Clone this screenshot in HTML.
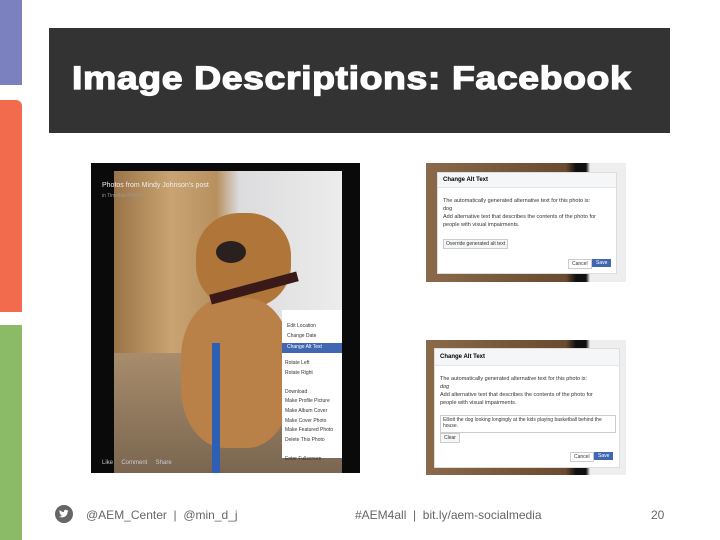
<!DOCTYPE html>
<html><head><style>
body{margin:0;width:720px;height:540px;background:#fff;position:relative;overflow:hidden;font-family:"Liberation Sans",sans-serif}
.a{position:absolute}
.t{font-size:6px;color:#333}
</style></head><body>
<div class="a" style="left:0;top:0;width:22px;height:85px;background:#7b80bf"></div>
<div class="a" style="left:0;top:100px;width:22px;height:212px;background:#f26b4c;border-radius:0 6px 0 0"></div>
<div class="a" style="left:0;top:325px;width:22px;height:215px;background:#8cbb68"></div>
<div class="a" style="left:49px;top:28px;width:621px;height:105px;background:#333"></div>
<div class="a" style="left:72px;top:60px;color:#fff;font-size:32px;font-weight:900;letter-spacing:0.5px;-webkit-text-stroke:1.2px #fff;transform:scaleX(1.17);transform-origin:0 0;white-space:nowrap">Image Descriptions: Facebook</div>

<!-- main photo -->
<div class="a" style="left:91px;top:163px;width:269px;height:310px;background:#0a0a0a;overflow:hidden">
 <div class="a" style="left:23px;top:8px;width:228px;height:302px;background:linear-gradient(90deg,#9a7448 0,#c9a472 25%,#b89060 45%,#dcdcde 55%,#ececec 100%)"></div>
 <div class="a" style="left:23px;top:190px;width:228px;height:120px;background:linear-gradient(180deg,#a88d6c,#7a6650)"></div>
 <div class="a" style="left:105px;top:50px;width:95px;height:95px;border-radius:45%;background:#b07538"></div>
 <div class="a" style="left:90px;top:135px;width:110px;height:150px;border-radius:40%;background:#b98048"></div>
 <div class="a" style="left:125px;top:78px;width:30px;height:22px;border-radius:50%;background:#2a2020"></div>
 <div class="a" style="left:118px;top:120px;width:90px;height:10px;background:#3a1a18;transform:rotate(-15deg)"></div>
 <div class="a" style="left:121px;top:180px;width:8px;height:130px;background:#2d5fb5"></div>
 <div class="a" style="left:11px;top:19px;color:#eee;font-size:7px">Photos from Mindy Johnson's post</div>
 <div class="a" style="left:11px;top:30px;color:#999;font-size:5px">in Timeline Photos</div>
 <div class="a" style="left:191px;top:147px;width:60px;height:148px;background:#fff"></div>
 <div class="a" style="left:191px;top:180px;width:60px;height:10px;background:#4267b2"></div>
 <div class="a t" style="left:196px;top:160px;font-size:5px">Edit Location</div>
 <div class="a t" style="left:196px;top:170px;font-size:5px">Change Date</div>
 <div class="a t" style="left:196px;top:181px;color:#fff;font-size:5px">Change Alt Text</div>
 <div class="a t" style="left:194px;top:196px;line-height:9.6px;font-size:5px">Rotate Left<br>Rotate Right<br><br>Download<br>Make Profile Picture<br>Make Album Cover<br>Make Cover Photo<br>Make Featured Photo<br>Delete This Photo<br><br>Enter Fullscreen</div>
 <div class="a" style="left:11px;top:297px;color:#ccc;font-size:6px">Like &nbsp;&nbsp;&nbsp; Comment &nbsp;&nbsp;&nbsp; Share</div>
</div>

<!-- right shots -->
<div class="a" style="left:426px;top:163px;width:200px;height:119px;background:linear-gradient(90deg,#8a6a4a,#6a4a30 70%,#111 75%,#111 80%,#eee 82%)"></div>
<div class="a" style="left:437px;top:172px;width:178px;height:100px;background:#fff;border:1px solid #ddd">
 <div style="height:15px;background:#f5f6f7;border-bottom:1px solid #e5e5e5;font-size:6px;font-weight:bold;padding:4px 0 0 5px;box-sizing:border-box">Change Alt Text</div>
 <div class="t" style="padding:9px 5px 0;font-size:5.5px;line-height:8px">The automatically generated alternative text for this photo is:<br>dog<br>Add alternative text that describes the contents of the photo for<br>people with visual impairments.</div>
 <div class="a t" style="left:5px;top:66px;border:1px solid #ccc;background:#f5f6f7;padding:1px 2px;font-size:5px">Override generated alt text</div>
 <div class="a t" style="left:130px;top:86px;border:1px solid #ccc;padding:1px 3px;font-size:5px">Cancel</div>
 <div class="a t" style="left:154px;top:86px;background:#4267b2;color:#fff;padding:1px 4px;font-size:5px">Save</div>
</div>
<div class="a" style="left:426px;top:340px;width:200px;height:135px;background:linear-gradient(90deg,#8a6a4a,#6a4a30 70%,#111 75%,#111 80%,#eee 82%)"></div>
<div class="a" style="left:434px;top:348px;width:184px;height:118px;background:#fff;border:1px solid #ddd">
 <div style="height:17px;background:#f5f6f7;border-bottom:1px solid #e5e5e5;font-size:6px;font-weight:bold;padding:5px 0 0 5px;box-sizing:border-box">Change Alt Text</div>
 <div class="t" style="padding:9px 5px 0;font-size:5.5px;line-height:8px">The automatically generated alternative text for this photo is:<br><i>dog</i><br>Add alternative text that describes the contents of the photo for<br>people with visual impairments.</div>
 <div class="a t" style="left:5px;top:66px;width:170px;height:14px;border:1px solid #ccc;font-size:5px;padding:1px 2px">Elliott the dog looking longingly at the kids playing basketball behind the house.</div>
 <div class="a t" style="left:5px;top:84px;border:1px solid #ccc;background:#f5f6f7;padding:1px 3px;font-size:5px">Clear</div>
 <div class="a t" style="left:135px;top:103px;border:1px solid #ccc;padding:1px 3px;font-size:5px">Cancel</div>
 <div class="a t" style="left:159px;top:103px;background:#4267b2;color:#fff;padding:1px 4px;font-size:5px">Save</div>
</div>

<!-- footer -->
<svg class="a" style="left:55px;top:505px" width="18" height="18" viewBox="0 0 18 18"><circle cx="9" cy="9" r="9" fill="#666"/><path d="M4 11.5c2 1.3 5 1.2 6.8-.5 1.3-1.2 1.8-2.8 1.8-4.3l1-1-1.2.3.8-1-1.2.4c-.9-1-2.6-.7-3 .6-.1.4-.1.8 0 1.1C7.3 7 5.7 6.2 4.7 5c-.5 1-.2 2 .6 2.6l-.8-.2c0 1 .7 1.7 1.6 1.9l-.8.1c.3.8 1 1.3 1.9 1.3-1 .7-2 .9-3.2.8z" fill="#fff"/></svg>
<div class="a" style="left:86px;top:508px;font-size:12px;color:#666">@AEM_Center &nbsp;| &nbsp;@min_d_j</div>
<div class="a" style="left:355px;top:508px;font-size:12px;color:#666">#AEM4all &nbsp;| &nbsp;bit.ly/aem-socialmedia</div>
<div class="a" style="left:651px;top:508px;font-size:12px;color:#666">20</div>
</body></html>
